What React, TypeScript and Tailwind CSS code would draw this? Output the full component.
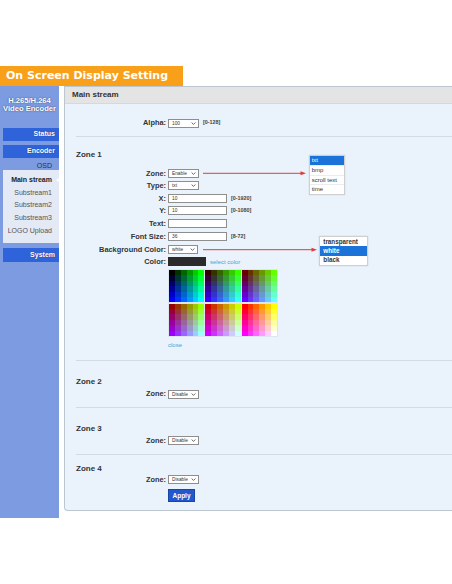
import React from 'react';

// 6 blocks of 6x6 web-safe colours: red per block, green across, blue down
const blocks = Array.from({ length: 6 }, (_, b) =>
  Array.from({ length: 36 }, (_, i) => {
    const red = b * 51;
    const green = (i % 6) * 51;
    const blue = Math.floor(i / 6) * 51;
    return `rgb(${red},${green},${blue})`;
  })
);

function Chevron() {
  return (
    <svg width="5" height="3" viewBox="0 0 5 3" className="shrink-0">
      <path d="M0.6 0.5 L2.5 2.4 L4.4 0.5" fill="none" stroke="#444" strokeWidth="0.8" />
    </svg>
  );
}

function Select({ value, width }: { value: string; width: string }) {
  return (
    <div
      className={`${width} ml-[2px] flex h-[9px] items-center justify-between border border-[#8e8e8e] bg-white pl-[3px] pr-[2px] text-[4.8px] text-[#333]`}
    >
      <span className="leading-[7px]">{value}</span>
      <Chevron />
    </div>
  );
}

function Input({ value = '' }: { value?: string }) {
  return (
    <div className="ml-[2px] flex h-[9px] w-[59px] items-center border border-[#8e8e8e] bg-white pl-[3px] text-[4.8px] leading-[7px] text-[#333]">
      {value}
    </div>
  );
}

function Hint({ children }: { children: React.ReactNode }) {
  return <span className="ml-[4px] text-[5.4px] font-semibold leading-none text-[#444]">{children}</span>;
}

function Row({ label, className = '', children }: { label: string; className?: string; children: React.ReactNode }) {
  return (
    <div className={`flex items-center ${className}`}>
      <div className="w-[90px] text-right text-[7.4px] font-bold leading-none text-[#333]">{label}</div>
      {children}
    </div>
  );
}

function ZoneTitle({ children, className = '' }: { children: React.ReactNode; className?: string }) {
  return <div className={`h-[10px] text-[8px] font-bold leading-[10px] text-[#333] ${className}`}>{children}</div>;
}

function NavButton({ children, className = '' }: { children: React.ReactNode; className?: string }) {
  return (
    <div
      className={`ml-[3px] flex items-center justify-end bg-[#2f63d9] pr-[4px] text-[7px] font-bold text-white [text-shadow:0_0_1px_#1a2f70] ${className}`}
    >
      {children}
    </div>
  );
}

export default function App() {
  return (
    <div className="relative h-[584px] w-[452px] overflow-hidden bg-white font-['Liberation_Sans',Arial,sans-serif]">
      <div className="h-[66px]" />
      <div className="flex h-[20px] w-[183px] items-center bg-[#f8a01a] pl-[6px] font-['DejaVu_Sans',sans-serif] text-[11px] font-bold text-white">
        On Screen Display Setting
      </div>

      <div className="flex">
        {/* sidebar */}
        <aside className="flex h-[432px] w-[59px] shrink-0 flex-col bg-[#7c9be0]">
          <div className="pt-[10.5px] text-center text-[7.6px] font-bold leading-[8.5px] text-white [text-shadow:0_0_1.5px_#24366e]">
            H.265/H.264
            <br />
            Video Encoder
          </div>
          <NavButton className="mt-[14px] h-[13.5px]">Status</NavButton>
          <NavButton className="mt-[3.5px] h-[13.5px]">Encoder</NavButton>
          <div className="mt-[4px] h-[8px] pr-[7px] text-right text-[7px] leading-[8px] text-[#1f2f5a]">OSD</div>
          <div className="ml-[3px] flex h-[73px] flex-col bg-[#e4e9f6] pb-[5.5px] pt-[4px] pr-[7px] text-right text-[7px] text-[#555]">
            <div className="relative h-[12.7px] font-bold leading-[12.7px] text-[#222]">
              Main stream
              <span className="absolute right-[-7px] top-[4px] h-0 w-0 border-y-[2.5px] border-r-[3px] border-y-transparent border-r-white" />
            </div>
            <div className="h-[12.7px] leading-[12.7px]">Substream1</div>
            <div className="h-[12.7px] leading-[12.7px]">Substream2</div>
            <div className="h-[12.7px] leading-[12.7px]">Substream3</div>
            <div className="h-[12.7px] leading-[12.7px]">LOGO Upload</div>
          </div>
          <NavButton className="mt-[5px] h-[14.4px]">System</NavButton>
        </aside>

        {/* main panel */}
        <main className="ml-[5px] flex h-[425px] flex-1 flex-col rounded-bl-[4px] border-b border-l border-t border-[#bcc6d1] bg-[#eaf3fc]">
          <div className="flex h-[17px] shrink-0 items-center border-b border-[#d3d9df] bg-[#e4e4e4] pl-[7px] text-[8px] font-bold text-[#333]">
            Main stream
          </div>

          <div className="flex flex-col pl-[11px]">
            <Row label="Alpha:" className="mt-[15px] h-[8px]">
              <Select value="100" width="w-[31px]" />
              <Hint>[0-128]</Hint>
            </Row>
            <div className="mt-[9px] border-t border-[#d2dae3]" />

            <ZoneTitle className="mt-[13px]">Zone 1</ZoneTitle>
            <Row label="Zone:" className="mt-[9px] h-[9px]">
              <Select value="Enable" width="w-[31px]" />
            </Row>
            <Row label="Type:" className="mt-[3px] h-[9px]">
              <Select value="txt" width="w-[31px]" />
            </Row>
            <Row label="X:" className="mt-[4px] h-[9px]">
              <Input value="10" />
              <Hint>[0-1920]</Hint>
            </Row>
            <Row label="Y:" className="mt-[3px] h-[9px]">
              <Input value="10" />
              <Hint>[0-1080]</Hint>
            </Row>
            <Row label="Text:" className="mt-[4px] h-[9px]">
              <Input />
            </Row>
            <Row label="Font Size:" className="mt-[4px] h-[9px]">
              <Input value="36" />
              <Hint>[8-72]</Hint>
            </Row>
            <Row label="Background Color:" className="mt-[4px] h-[9px]">
              <Select value="white" width="w-[30px]" />
            </Row>
            <Row label="Color:" className="mt-[3px] h-[9px]">
              <div className="ml-[2px] h-[9px] w-[38px] bg-[#2b2b2b]" />
              <span className="ml-[4px] text-[6px] leading-none text-[#3fa3d6]">select color</span>
            </Row>
            <div className="ml-[92px] mt-[3px] grid h-[68px] w-[110px] grid-cols-3 grid-rows-2 gap-px border border-[#dde6ee] bg-[#dde6ee]">
              {blocks.map((cells, b) => (
                <div key={b} className="grid grid-cols-6 grid-rows-6">
                  {cells.map((c, i) => (
                    <div key={i} style={{ backgroundColor: c }} />
                  ))}
                </div>
              ))}
            </div>
            <div className="ml-[92px] mt-[4px] h-[8px] text-[6px] leading-[8px] text-[#3fa3d6]">close</div>
            <div className="mt-[11px] border-t border-[#d2dae3]" />

            <ZoneTitle className="mt-[16px]">Zone 2</ZoneTitle>
            <Row label="Zone:" className="mt-[2.5px] h-[9px]">
              <Select value="Disable" width="w-[31px]" />
            </Row>
            <div className="mt-[8.5px] border-t border-[#d2dae3]" />

            <ZoneTitle className="mt-[16px]">Zone 3</ZoneTitle>
            <Row label="Zone:" className="mt-[2px] h-[9px]">
              <Select value="Disable" width="w-[31px]" />
            </Row>
            <div className="mt-[9px] border-t border-[#d2dae3]" />

            <ZoneTitle className="mt-[9px]">Zone 4</ZoneTitle>
            <Row label="Zone:" className="mt-[1px] h-[9px]">
              <Select value="Disable" width="w-[31px]" />
            </Row>
            <div className="ml-[92px] mt-[5px] flex h-[13px] w-[27px] items-center justify-center border border-[#1846a8] bg-[#2258cc] text-[6.5px] font-bold text-white">
              Apply
            </div>
          </div>
        </main>
      </div>

      {/* opened dropdown lists */}
      <div className="absolute left-[308.7px] top-[154.7px] flex w-[36.6px] flex-col border border-[#cfcfcf] bg-white text-[6px] leading-none text-[#333] shadow-[0_0_1px_rgba(0,0,0,0.2)]">
        <div className="flex h-[9.5px] items-center bg-[#1b72d8] pl-[2px] text-white">txt</div>
        <div className="flex h-[9.5px] items-center border-t border-[#ececec] pl-[2px]">bmp</div>
        <div className="flex h-[9.5px] items-center border-t border-[#ececec] pl-[2px]">scroll text</div>
        <div className="flex h-[9.5px] items-center border-t border-[#ececec] pl-[2px]">time</div>
      </div>
      <div className="absolute left-[319.3px] top-[236px] flex w-[48.7px] flex-col border border-[#cfcfcf] bg-white text-[6.3px] font-semibold leading-none text-[#333] shadow-[0_0_1px_rgba(0,0,0,0.2)]">
        <div className="flex h-[9.3px] items-center pl-[3px]">transparent</div>
        <div className="flex h-[9.3px] items-center bg-[#1b72d8] pl-[3px] text-white">white</div>
        <div className="flex h-[9.3px] items-center pl-[3px]">black</div>
      </div>

      {/* annotation arrows */}
      <svg className="pointer-events-none absolute left-0 top-0" width="452" height="584" viewBox="0 0 452 584">
        <line x1="203" y1="173.3" x2="302" y2="173.3" stroke="#e23b3b" strokeWidth="1" />
        <polygon points="306,173.3 300.5,171.3 300.5,175.3" fill="#e23b3b" />
        <line x1="203" y1="249.7" x2="313" y2="249.7" stroke="#e23b3b" strokeWidth="1" />
        <polygon points="317,249.7 311.5,247.7 311.5,251.7" fill="#e23b3b" />
      </svg>
    </div>
  );
}
